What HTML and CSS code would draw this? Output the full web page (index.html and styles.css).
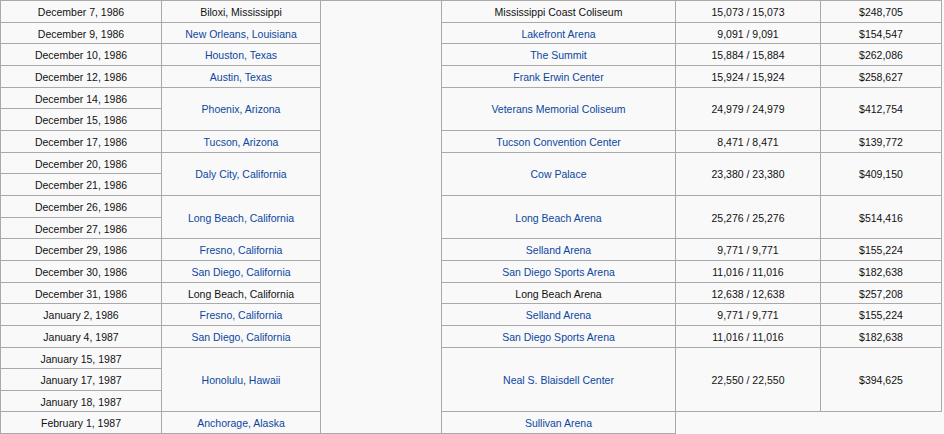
FILE: index.html
```html
<!DOCTYPE html>
<html lang="en">
<head>
<meta charset="utf-8">
<title>Tour dates</title>
<link rel="stylesheet" href="styles.css">
</head>
<body>
<table class="wikitable">
  <colgroup>
    <col class="c-date"><col class="c-city"><col class="c-country"><col class="c-venue"><col class="c-att"><col class="c-rev">
  </colgroup>
  <tbody>
    <tr><td>December 7, 1986</td><td>Biloxi, Mississippi</td><td class="country" rowspan="20"></td><td>Mississippi Coast Coliseum</td><td>15,073 / 15,073</td><td>$248,705</td></tr>
    <tr><td>December 9, 1986</td><td><a href="#">New Orleans, Louisiana</a></td><td><a href="#">Lakefront Arena</a></td><td>9,091 / 9,091</td><td>$154,547</td></tr>
    <tr><td>December 10, 1986</td><td><a href="#">Houston, Texas</a></td><td><a href="#">The Summit</a></td><td>15,884 / 15,884</td><td>$262,086</td></tr>
    <tr><td>December 12, 1986</td><td><a href="#">Austin, Texas</a></td><td><a href="#">Frank Erwin Center</a></td><td>15,924 / 15,924</td><td>$258,627</td></tr>
    <tr><td>December 14, 1986</td><td rowspan="2"><a href="#">Phoenix, Arizona</a></td><td rowspan="2"><a href="#">Veterans Memorial Coliseum</a></td><td rowspan="2">24,979 / 24,979</td><td rowspan="2">$412,754</td></tr>
    <tr><td>December 15, 1986</td></tr>
    <tr><td>December 17, 1986</td><td><a href="#">Tucson, Arizona</a></td><td><a href="#">Tucson Convention Center</a></td><td>8,471 / 8,471</td><td>$139,772</td></tr>
    <tr><td>December 20, 1986</td><td rowspan="2"><a href="#">Daly City, California</a></td><td rowspan="2"><a href="#">Cow Palace</a></td><td rowspan="2">23,380 / 23,380</td><td rowspan="2">$409,150</td></tr>
    <tr><td>December 21, 1986</td></tr>
    <tr><td>December 26, 1986</td><td rowspan="2"><a href="#">Long Beach, California</a></td><td rowspan="2"><a href="#">Long Beach Arena</a></td><td rowspan="2">25,276 / 25,276</td><td rowspan="2">$514,416</td></tr>
    <tr><td>December 27, 1986</td></tr>
    <tr><td>December 29, 1986</td><td><a href="#">Fresno, California</a></td><td><a href="#">Selland Arena</a></td><td>9,771 / 9,771</td><td>$155,224</td></tr>
    <tr><td>December 30, 1986</td><td><a href="#">San Diego, California</a></td><td><a href="#">San Diego Sports Arena</a></td><td>11,016 / 11,016</td><td>$182,638</td></tr>
    <tr><td>December 31, 1986</td><td>Long Beach, California</td><td>Long Beach Arena</td><td>12,638 / 12,638</td><td>$257,208</td></tr>
    <tr><td>January 2, 1986</td><td><a href="#">Fresno, California</a></td><td><a href="#">Selland Arena</a></td><td>9,771 / 9,771</td><td>$155,224</td></tr>
    <tr><td>January 4, 1987</td><td><a href="#">San Diego, California</a></td><td><a href="#">San Diego Sports Arena</a></td><td>11,016 / 11,016</td><td>$182,638</td></tr>
    <tr><td>January 15, 1987</td><td rowspan="3"><a href="#">Honolulu, Hawaii</a></td><td rowspan="3"><a href="#">Neal S. Blaisdell Center</a></td><td rowspan="3">22,550 / 22,550</td><td rowspan="3">$394,625</td></tr>
    <tr><td>January 17, 1987</td></tr>
    <tr><td>January 18, 1987</td></tr>
    <tr><td>February 1, 1987</td><td><a href="#">Anchorage, Alaska</a></td><td><a href="#">Sullivan Arena</a></td></tr>
  </tbody>
</table>
</body>
</html>
```

FILE: styles.css
```css
html, body {
  margin: 0;
  padding: 0;
  background: #f9f9f9;
}

body {
  font-family: "Liberation Sans", Arial, sans-serif;
  font-size: 10.5px;
  color: #111;
}

.wikitable {
  border-collapse: collapse;
  table-layout: fixed;
  width: 941px;
  background: #f9f9f9;
}

.wikitable td {
  border: 1px solid #aaa;
  padding: 3px 4px 1px;
  line-height: 16.65px;
  text-align: center;
  vertical-align: middle;
  white-space: nowrap;
  overflow: hidden;
}

.c-date { width: 161px; }
.c-city { width: 159px; }
.c-country { width: 121px; }
.c-venue { width: 234px; }
.c-att { width: 145px; }
.c-rev { width: 121px; }

.wikitable a {
  color: #0b47a0;
  text-decoration: none;
}
```
